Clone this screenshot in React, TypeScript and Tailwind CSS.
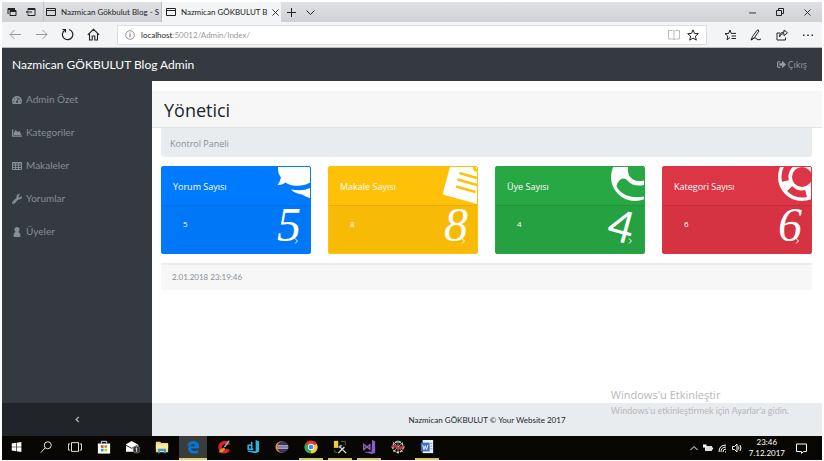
import type { ReactNode } from "react";
import { FaChartArea, FaSignOutAlt, FaTachometerAlt, FaWrench } from "react-icons/fa";

const line = { fill: "none", stroke: "currentColor", strokeWidth: 1 } as const;

function Ico({ children, size = 14, box = 16 }: { children: ReactNode; size?: number; box?: number }) {
  return (
    <svg width={size} height={size} viewBox={`0 0 ${box} ${box}`} aria-hidden="true" className="shrink-0">
      {children}
    </svg>
  );
}

const PageIcon = () => (
  <Ico size={10} box={10}>
    <path d="M.5 1.500h9v7h-9zM.5 3.500h9" {...line} />
  </Ico>
);

function BrowserChrome() {
  return (
    <header className="text-[#222]">
      <div className="flex h-5 items-stretch bg-gradient-to-b from-[#dfe1e4] to-[#cfd1d5]">
        <div className="flex w-[41px] items-center justify-between pr-[7px] pl-[5px]">
          <button type="button" aria-label="Tabs you've set aside">
            <Ico size={10} box={10}>
              <path d="M3 3.500h6v5H3zM1 7V1.500h6" {...line} />
              <path d="M1 1h7v2H1zM3 3h6v2H3z" fill="currentColor" />
            </Ico>
          </button>
          <button type="button" aria-label="Set these tabs aside">
            <Ico size={10} box={10}>
              <path d="M2 3V1.500h7v7H2V7M0 5h6M2 3.500 0.500 5 2 6.500" {...line} />
              <path d="M2 1h7v2H2z" fill="currentColor" />
            </Ico>
          </button>
        </div>
        <button type="button" className="flex w-[119px] items-center gap-[5px] border-x border-[#bfc1c4] pl-[2px] text-left">
          <PageIcon />
          <span className="font-['Lato','Open_Sans',sans-serif] text-[8px] leading-4 whitespace-nowrap">Nazmican Gökbulut Blog - S</span>
        </button>
        <button type="button" className="flex w-[119px] items-center gap-[5px] bg-[#f3f4f5] pr-2 pl-[4px] text-left">
          <PageIcon />
          <span className="flex-1 font-['Lato','Open_Sans',sans-serif] text-[8px] leading-4 whitespace-nowrap">Nazmican GÖKBULUT B</span>
          <Ico size={7} box={8}>
            <path d="M.5.5l7 7M7.500.5l-7 7" {...line} />
          </Ico>
        </button>
        <div className="flex items-center gap-[10px] pl-[6px]">
          <button type="button" aria-label="New tab">
            <Ico size={9} box={9}>
              <path d="M4.500 0v9M0 4.500h9" {...line} />
            </Ico>
          </button>
          <button type="button" aria-label="Tab list">
            <Ico size={9} box={9}>
              <path d="M.5 2.500l4 4 4-4" {...line} />
            </Ico>
          </button>
        </div>
        <div className="ml-auto flex items-center gap-[20px] pr-[11px]">
          <button type="button" aria-label="Minimize">
            <Ico size={7} box={8}>
              <path d="M0 4.500h8" {...line} />
            </Ico>
          </button>
          <button type="button" aria-label="Restore">
            <Ico size={8} box={8}>
              <path d="M.5 2.500h5v5h-5zM2.500 2.500v-2h5v5h-2" {...line} />
            </Ico>
          </button>
          <button type="button" aria-label="Close">
            <Ico size={7} box={8}>
              <path d="M.5.5l7 7M7.500.5l-7 7" {...line} />
            </Ico>
          </button>
        </div>
      </div>
      <div className="flex h-[26px] items-center border-b border-[#b9bbbd] bg-[#f3f4f5] pr-2 pl-[7px]">
        <div className="flex items-center gap-[13px]">
          <button type="button" aria-label="Back" className="text-[#999]">
            <Ico size={13} box={13}>
              <path d="M12 6.500H1M5.500 2l-4.500 4.500 4.500 4.500" {...line} />
            </Ico>
          </button>
          <button type="button" aria-label="Forward" className="text-[#999]">
            <Ico size={13} box={13}>
              <path d="M1 6.500h11M7.500 2l4.500 4.500-4.500 4.500" {...line} />
            </Ico>
          </button>
          <button type="button" aria-label="Refresh">
            <Ico size={13} box={13}>
              <path d="M8 1.500A5.200 5.200 0 1 1 4 2M1.500 1.500H4.500V4.500" {...line} strokeWidth={1.2} />
            </Ico>
          </button>
          <button type="button" aria-label="Home">
            <Ico size={13} box={13}>
              <path d="M.8 6.800l5.700-5.500 5.700 5.500M2.500 5.500v6.500h2.700V8h2.600v4h2.700V5.500" {...line} strokeWidth={1.1} />
            </Ico>
          </button>
        </div>
        <div className="ml-[17px] flex h-5 flex-1 items-center border border-[#dcdddf] bg-white px-[7px]">
          <Ico size={10} box={10}>
            <circle cx="5" cy="5" r="4.300" {...line} strokeWidth={0.8} opacity={0.6} />
            <path d="M5 4.200v3M5 2.500v1" {...line} opacity={0.7} />
          </Ico>
          <div className="relative ml-[6px] flex-1 font-['Lato','Open_Sans',sans-serif] text-[8px] leading-4">
            <input
              aria-label="Address"
              defaultValue="localhost:50012/Admin/Index/"
              className="block w-full bg-transparent text-transparent outline-none"
            />
            <span className="pointer-events-none absolute inset-0 text-[#999]" aria-hidden="true">
              <span className="text-[#222]">localhost</span>:50012/Admin/Index/
            </span>
          </div>
          <button type="button" aria-label="Reading view" className="text-[#bbb]">
            <Ico size={12} box={12}>
              <path d="M.5 1.500h4q1.500 0 1.500 1 0-1 1.500-1h4v8.500h-4q-1.500 0-1.500 1 0-1-1.500-1h-4zM6 2.500v8.500" {...line} />
            </Ico>
          </button>
          <button type="button" aria-label="Add to favorites" className="ml-[7px]">
            <Ico size={12} box={12}>
              <path d="M6 .8l1.500 3.600 3.800.3-2.900 2.500.9 3.900L6 9.100l-3.300 2 .9-3.900L.7 4.700l3.800-.3z" {...line} />
            </Ico>
          </button>
        </div>
        <div className="ml-[17px] flex items-center gap-[14px]">
          <button type="button" aria-label="Hub">
            <Ico size={12} box={12}>
              <path d="M6 8.500l-3 2.300.8-3.800L1 4.700l3.600-.3L6 1l1.200 3.400H12M7.500 7H12M7.500 9.500H12" {...line} />
            </Ico>
          </button>
          <button type="button" aria-label="Make a Web Note">
            <Ico size={12} box={12}>
              <path d="M1 11l1.500-3.500L7 1.300q1.500-1 2 .7L4.500 8.500 1 11q4-3 5-2t1 1.500q2 .8 4-.5" {...line} />
            </Ico>
          </button>
          <button type="button" aria-label="Share">
            <Ico size={12} box={12}>
              <path d="M4 4H1v7h8.500V8.500M3.500 8Q4 4.500 8 4.500V6.700L11.500 3.800 8 1v2.200Q3.500 3 3.500 8z" {...line} />
            </Ico>
          </button>
          <button type="button" aria-label="More">
            <Ico size={12} box={12}>
              <path d="M1 5.500h1.400v1.400H1zM5.300 5.500h1.400v1.400H5.300zM9.600 5.500H11v1.400H9.600z" fill="currentColor" />
            </Ico>
          </button>
        </div>
      </div>
    </header>
  );
}

const menu = [
  { label: "Admin Özet", icon: <FaTachometerAlt className="size-[10px]" /> },
  { label: "Kategoriler", icon: <FaChartArea className="size-[10px]" /> },
  {
    label: "Makaleler",
    icon: (
      <Ico size={10} box={10}>
        <path d="M.5 1.500h9v7h-9zM.5 4h9M.5 6.500h9M3.500 1.500v7M6.500 1.500v7" {...line} />
        <path d="M0 1h10v1.500H0z" fill="currentColor" />
      </Ico>
    ),
  },
  { label: "Yorumlar", icon: <FaWrench className="size-[10px]" /> },
  {
    label: "Üyeler",
    icon: (
      <Ico size={10} box={10}>
        <path
          d="M5 0a2.500 2.500 0 0 1 1.800 4.300L6.600 5Q8.500 5.600 8.500 8.500 8.400 10 7.300 10H2.700Q1.600 10 1.500 8.500 1.500 5.600 3.400 5L3.200 4.300A2.500 2.500 0 0 1 5 0z"
          fill="currentColor"
        />
      </Ico>
    ),
  },
];

const cards = [
  {
    label: "Yorum Sayısı",
    value: 5,
    color: "bg-[#007bff] border-[#007bff]",
    digit: "font-['Liberation_Serif',serif] italic text-[48px]",
    art: (
      <path
        d="M4 0Q3.500 6 7 10.500 6 15 3.500 18 8.500 18 11.500 15.500 15 18.500 22 18.700 30 19 36 15.500V0zM17 22.500Q20 26 28 27.500 32 30 36 31V21Q29 24.500 17 22.500z"
        fill="#fff"
      />
    ),
  },
  {
    label: "Makale Sayısı",
    value: 8,
    color: "bg-[#ffc107] border-[#ffc107]",
    digit: "font-['Liberation_Serif',serif] italic text-[48px]",
    art: (
      <>
        <path d="M9 0L2 25.500Q1.700 27.500 3.500 28L36 37V0z" fill="#fff" />
        <path d="M18.500 6L36 11M16.500 12.500L36 18M15 19.500L34.500 25M33 0l1 3 2 .5" stroke="#ffc107" strokeWidth="2.600" fill="none" />
      </>
    ),
  },
  {
    label: "Üye Sayısı",
    value: 4,
    color: "bg-[#28a745] border-[#28a745]",
    digit: "rotate-[15deg] font-['Lato','Open_Sans',sans-serif] text-[44px]",
    art: (
      <>
        <circle cx="27" cy="10" r="24" fill="#fff" />
        <path d="M8.500 19Q10 13 14.500 11.500 18 11 20 14 25 20 36 18V29.500Q24 32 15 26.500 10 23 8.500 19zM20 0Q19 9 25 12.500 30 15 36 13.500V0z" fill="#28a745" />
      </>
    ),
  },
  {
    label: "Kategori Sayısı",
    value: 6,
    color: "bg-[#dc3545] border-[#dc3545]",
    digit: "font-['Liberation_Serif',serif] italic text-[48px]",
    art: (
      <>
        <circle cx="27" cy="10" r="24" fill="#fff" />
        <circle cx="27" cy="10" r="10" fill="#dc3545" />
        <circle cx="27" cy="10" r="17" fill="none" stroke="#dc3545" strokeWidth="7" strokeDasharray="17.800 8.900" transform="rotate(76 27 10)" />
      </>
    ),
  },
];

function Tile({ children, active, open, label }: { children: ReactNode; active?: boolean; open?: boolean; label: string }) {
  return (
    <button
      type="button"
      aria-label={label}
      className={`flex items-center justify-center border-b-2 ${active ? "w-7 border-[#e5cf6b] bg-[#3b3b3b]" : open ? "w-6 border-[#d9c464]" : "w-6 border-transparent"}`}
    >
      <Ico>{children}</Ico>
    </button>
  );
}

function Taskbar() {
  return (
    <footer className="flex h-6 items-stretch bg-[#080603] pr-[2px] pl-[3px] text-white">
      <div className="flex gap-[5px]">
        <Tile label="Start">
          <path d="M2 4l5-.8V7.700H2zM7.700 3.100L13 2.300v5.400H7.700zM2 8.300h5v4.500L2 12zM7.700 8.300H13v5.400l-5.300-.8z" fill="#fff" />
        </Tile>
        <Tile label="Search">
          <circle cx="10" cy="6" r="4" {...line} />
          <path d="M7 9l-5 5.500" {...line} />
        </Tile>
        <Tile label="Task view">
          <path d="M4 3h8v10H4zM2.500 4.500h-2v7h2M13.500 4.500h2v7h-2" {...line} />
        </Tile>
        <Tile label="Store">
          <path d="M5 4V1.500h6V4" {...line} />
          <path d="M1 4h14v11.500H1z" fill="#fff" />
          <path d="M4.500 6h3v3h-3z" fill="#e8412c" />
          <path d="M8.500 6h3v3h-3z" fill="#6bb52a" />
          <path d="M4.500 10h3v3h-3z" fill="#1c9de0" />
          <path d="M8.500 10h3v3h-3z" fill="#f6b800" />
        </Tile>
        <Tile label="Mail">
          <path d="M-1 5.500l7.500-4.500 7.500 4.500v8H-1z" fill="#fff" />
          <path d="M0 6l6.500 3.500L13 6" stroke="#111" fill="none" />
          <circle cx="12" cy="11" r="4" fill="#333" stroke="#999" strokeWidth=".6" />
          <path d="M11 10l1.200-1v4.500" stroke="#fff" fill="none" />
        </Tile>
        <Tile label="File Explorer">
          <path d="M1 2h5l1 1.500h8V14H1z" fill="#f7d774" />
          <path d="M1 5h14v5H1z" fill="#ffe9a0" />
          <path d="M3.500 15V10h9v5h-2v-2.500h-5V15z" fill="#2f9be6" />
        </Tile>
        <Tile label="Edge" active>
          <path d="M1 8Q2 1 8.300 1 15 1 15 8v1.500H5.500q.5 3 4.500 3 2.500 0 4-1v3q-2 1-5 1-6.500 0-6.500-6Q2.700 6 6 4.800 2.500 5 1 8zM5.500 7h5q0-2.500-2.500-2.500T5.500 7z" fill="#0078d7" />
        </Tile>
        <Tile label="CCleaner">
          <path d="M13 5.500Q12 2 8 3 3 4.500 3.500 9T9 13.500q3-.5 3.500-3" fill="none" stroke="#d6281d" strokeWidth="4" />
          <path d="M8.500 8L14 .8" stroke="#8fb8e0" strokeWidth="1.500" />
          <path d="M4 10.500l4-2 1.500 2L5.500 14.500 2 14z" fill="#e98a2b" />
        </Tile>
        <Tile label="Azure Data tools">
          <path d="M11 0l4 1.500v12L11 15l-9-1.500V12l9 .8z" fill="#2cb5dc" />
          <path d="M2.500 6h4v4.500h-4zM6.500 2v8.500h2" fill="none" stroke="#2cb5dc" strokeWidth="1.800" />
        </Tile>
        <Tile label="Eclipse">
          <circle cx="7" cy="8" r="6.500" fill="#e6902a" />
          <circle cx="8.800" cy="8" r="6.500" fill="#3d3269" />
          <path d="M2.500 6.500h12.600M2.200 8h13M2.500 9.500h12.600" stroke="#ddd" strokeWidth=".9" />
        </Tile>
        <Tile label="Chrome" open>
          <path d="M8 8L1.500 4.200A7.500 7.500 0 0 1 14.500 4.200z" fill="#e33b2e" />
          <path d="M8 8L14.500 4.200A7.500 7.500 0 0 1 8 15.500z" fill="#f8cf38" />
          <path d="M8 8V15.500A7.500 7.500 0 0 1 1.500 4.200z" fill="#34a853" />
          <circle cx="8" cy="8" r="3.600" fill="#fff" />
          <circle cx="8" cy="8" r="2.700" fill="#4285f4" />
        </Tile>
        <Tile label="SQL Server" open>
          <path d="M1 1h5v8H1z" fill="#f2cd37" />
          <path d="M9 1.500h5V6M2 11v3h3" stroke="#487a36" fill="none" />
          <path d="M6 15l7-7M7 7l8 8" stroke="#ddd" strokeWidth="1.600" />
          <path d="M6 8l3-3 1.500 1.500-3 3z" fill="#8eb8d5" />
        </Tile>
        <Tile label="Visual Studio" open>
          <path d="M11.500 0L15 1.500v13L11.500 16 2 13.800l9-.8z" fill="#8a5fc7" />
          <path d="M2 5v6l7-5.500v5z" stroke="#8a5fc7" fill="none" strokeWidth="1.600" />
        </Tile>
        <Tile label="Network tool">
          <circle cx="8" cy="8" r="6" stroke="#ddd" fill="none" strokeDasharray="3 1" strokeWidth="1.500" />
          <path d="M8 0v16M0 8h16M2.500 2.500l11 11M13.500 2.500l-11 11" stroke="#ccc" strokeWidth=".8" />
          <path d="M1 8q3-4 6 0t7-1" stroke="#e1262f" fill="none" strokeWidth="2" />
        </Tile>
        <Tile label="Word" open>
          <path d="M3 0h12v15H3z" fill="#e9f0fb" />
          <path d="M1 3h10v10H1z" fill="#3b6fc4" />
          <path d="M3 5.500L4.500 11 6 6.500 7.500 11 9 5.500" stroke="#fff" fill="none" />
          <path d="M12 4h2M12 7h2M12 10h2" stroke="#5a83c8" />
        </Tile>
      </div>
      <div className="ml-auto flex items-center gap-[5px]">
        <Ico size={8} box={8}>
          <path d="M.5 6L4 2.500 7.500 6" {...line} />
        </Ico>
        <Ico size={10} box={10}>
          <path d="M2 3h7v5H2z" fill="#ddd" />
          <path d="M9 4.500h1v2H9zM0 1.500h3.500v3H0z" fill="#fff" />
        </Ico>
        <Ico size={9} box={9}>
          <path d="M1 8Q1 1 8 1M3 8Q3 3 8 3M5 8Q5 5 8 5M7 8h1" {...line} />
        </Ico>
        <Ico size={10} box={10}>
          <path d="M.5 3.500h2L5 1v8L2.500 6.500h-2zM6.500 3.500q1 1.500 0 3M8 2q2 3 0 6" {...line} />
        </Ico>
        <time className="ml-[2px] text-center font-['Lato','Open_Sans',sans-serif] text-[8px] leading-[11px]">
          23:46
          <br />
          7.12.2017
        </time>
        <button type="button" aria-label="Notifications" className="mr-[13px] ml-[6px]">
          <Ico size={11} box={11}>
            <path d="M.5 1h10v7.500h-3L5.500 10.500V8.500h-5z" {...line} />
          </Ico>
        </button>
      </div>
    </footer>
  );
}

export default function App() {
  return (
    <div className="flex min-h-screen flex-col bg-white pt-[2px] pr-[2px] pb-px pl-[2px] font-['Open_Sans','Noto_Sans',sans-serif]">
      <BrowserChrome />
      <div className="relative flex flex-1 flex-col">
        <nav className="flex h-[33px] items-center justify-between bg-[#343a40] pr-[15px] pl-[10px]">
          <a href="#top" className="font-['Lato','Open_Sans',sans-serif] text-xs text-white">
            Nazmican GÖKBULUT Blog Admin
          </a>
          <a href="#logout" className="flex items-center gap-[2px] text-[9px] text-[#999c9f]">
            <FaSignOutAlt className="size-[9px]" />
            Çıkış
          </a>
        </nav>
        <div className="flex flex-1">
          <aside className="flex w-[150px] shrink-0 flex-col justify-between bg-[#343a40]">
            <ul className="pt-[2px]">
              {menu.map(({ label, icon }) => (
                <li key={label}>
                  <a href="#menu" className="flex h-[33px] items-center gap-1 pl-[10px] font-['Lato','Open_Sans',sans-serif] text-[10px] text-[#868e96]">
                    {icon}
                    {label}
                  </a>
                </li>
              ))}
            </ul>
            <button type="button" aria-label="Collapse menu" className="flex h-[33px] items-center justify-center bg-[#212529] text-[#b0b3b6]">
              <Ico size={7} box={8}>
                <path d="M5.500 1L2.500 4l3 3" {...line} strokeWidth={1.6} />
              </Ico>
            </button>
          </aside>
          <div className="flex flex-1 flex-col">
            <main className="flex-1 pt-[10px]">
              <h1 className="h-[37px] border-b border-[#e3e3e3] bg-[#f7f7f7] pl-3 text-[18px] leading-[38px] text-[#212529]">Yönetici</h1>
              <div className="pr-[10px] pl-[9px]">
                <p className="rounded-b-sm bg-[#e9ecef] px-[9px] text-[9px] leading-[31px] text-[#868e96] h-[29px]">Kontrol Paneli</p>
                <div className="mt-[9px] grid grid-cols-4 gap-[17px]">
                  {cards.map((card) => (
                    <a key={card.label} href="#detail" className={`relative block overflow-hidden rounded-xs border text-white ${card.color}`}>
                      <span className="block h-[39px] border-b border-black/10 pl-[11px] text-[9px] leading-[40px]">{card.label}</span>
                      <span className="block h-[47px] bg-black/3 pl-[21px] text-[8px] leading-[36px]">{card.value}</span>
                      <svg className="absolute top-0 right-0" width="36" height="38" viewBox="0 0 36 38" aria-hidden="true">
                        {card.art}
                      </svg>
                      <span className={`absolute right-[9px] bottom-2 leading-10 ${card.digit}`} aria-hidden="true">
                        {card.value}
                      </span>
                      <svg className="absolute right-[11px] bottom-[9px]" width="5" height="6" viewBox="0 0 5 6" aria-hidden="true">
                        <path d="M1 .5L3.500 3 1 5.500" {...line} />
                      </svg>
                    </a>
                  ))}
                </div>
                <p className="mt-[9px] border-t-2 border-[#ebebeb] bg-[#f7f7f7] px-[11px] font-['Lato','Open_Sans',sans-serif] text-[8px] leading-[25px] text-[#868e96]">
                  2.01.2018 23:19:46
                </p>
              </div>
            </main>
            <footer className="h-[33px] bg-[#e9ecef] text-center font-['Lato','Open_Sans',sans-serif] text-[8px] leading-[34px] text-[#212529]">
              Nazmican GÖKBULUT © Your Website 2017
            </footer>
          </div>
        </div>
        <div className="pointer-events-none absolute right-[33px] bottom-[18px] text-[#b5b7b9]">
          <p className="text-[11px] leading-[18px]">Windows'u Etkinleştir</p>
          <p className="font-['Lato','Open_Sans',sans-serif] text-[9px] leading-[14px]">Windows'u etkinleştirmek için Ayarlar'a gidin.</p>
        </div>
      </div>
      <Taskbar />
    </div>
  );
}
